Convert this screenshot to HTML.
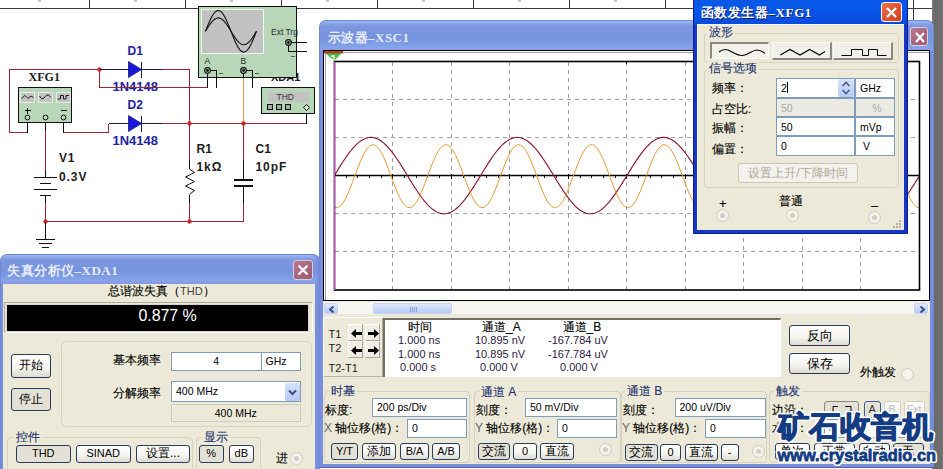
<!DOCTYPE html>
<html><head><meta charset="utf-8">
<style>
*{box-sizing:border-box;margin:0;padding:0}
html,body{width:943px;height:469px;overflow:hidden;background:#fff}
body{position:relative;font-family:"Liberation Sans",sans-serif;font-size:12px;color:#000}
.a{position:absolute}
svg{position:absolute;left:0;top:0;overflow:visible}
.sch{font-family:"Liberation Sans",sans-serif;font-weight:bold}
.win-in{background:#7a8ede;border:1px solid #6f88d4;border-bottom-color:#5a5aa8}
.tb-in{background:linear-gradient(#a0baf0 0,#8ea9ea 2px,#7b97e0 5px,#7693de 55%,#84a3ea 88%,#8e96dc 100%)}
.ttl-in{color:#e6ebf8;font-family:"Liberation Serif",serif;font-weight:bold;letter-spacing:0.2px;white-space:nowrap;line-height:14px}
.xbtn-in{background:linear-gradient(135deg,#b87890,#9c5870);border:1px solid #dccce0;border-radius:3px}
.txt{font-size:12px;white-space:nowrap;line-height:13px;-webkit-text-stroke:0.12px #000}
.hdr{font-size:12px;white-space:nowrap;line-height:13px;-webkit-text-stroke:0.12px #000}
.val{font-size:11px;white-space:nowrap;line-height:12px;color:#2c2040}
.btn{border:1px solid #2a3c5c;border-radius:3px;background:linear-gradient(#fff,#f4f3ee 60%,#dcdad0);text-align:center;font-size:12px;line-height:15px;white-space:nowrap;overflow:hidden}
.btn.pressed{background:#e3e1d6}
.edit{background:#fff;border:1px solid #7f9db9;font-size:10.5px;line-height:17px;padding-left:4px;white-space:nowrap;overflow:hidden}
.grp{border:1px solid #d5d2c2;border-radius:4px}
.glbl{background:#ece9d8;color:#1e3470;font-size:12px;line-height:13px;padding:0 2px;white-space:nowrap;-webkit-text-stroke:0.12px #1e3470}
.radio{width:13px;height:13px;border-radius:50%;border:1px solid #d0ccc0;background:#f4f2ea}
.radio.dis::after{content:"";position:absolute;left:3px;top:3px;width:5px;height:5px;border-radius:50%;background:#d0cdc4}
.sbtn{background:linear-gradient(#dfe8fc,#b8cbf6);border:1px solid #c5d4f6;border-radius:2px}
.abtn{width:15px;height:17px;background:#efede4;border-right:1px solid #a8a69a;border-bottom:1px solid #a8a69a;border-top:1px solid #fff;border-left:1px solid #fff}
.win-act{background:#1636c4;border:1px solid #0c1c8c}
.tb-act{background:linear-gradient(#2a6cf0 0,#0a5ae8 3px,#0656e8 50%,#0a4ee0 90%,#0846d4 100%)}
.ttl-act{color:#fff;font-family:"Liberation Serif",serif;font-weight:bold;white-space:nowrap;text-shadow:1px 1px 0 #0a1c70;line-height:14px;letter-spacing:0.3px}
.xbtn-act{background:linear-gradient(135deg,#ee7050,#d03c1c);border:1px solid #fff;border-radius:3px}
.wbtn{background:#f0efe8;border-right:2px solid #8c8a7e;border-bottom:2px solid #8c8a7e;border-top:1px solid #fff;border-left:1px solid #fff}
.wbtn.pressed{background:#f2f1ea;border-top:2px solid #8c8a7e;border-left:2px solid #8c8a7e;border-right:1px solid #fff;border-bottom:1px solid #fff}
.btn.dis{color:#aca899;border-color:#c9c7ba;background:#f3f2ec}
.wm1{font-size:32px;font-weight:900;color:#143c82;letter-spacing:-1px;white-space:nowrap;line-height:40px;-webkit-text-stroke:3px #fff;paint-order:stroke fill}
.wm2{font-size:17px;font-weight:bold;color:#143c82;white-space:nowrap;line-height:20px;-webkit-text-stroke:3px #fff;paint-order:stroke fill}
</style></head><body>

<!-- ===== schematic background ===== -->
<svg width="943" height="469" viewBox="0 0 943 469" shape-rendering="crispEdges">
  <g stroke="#3a3a3a" stroke-width="1" fill="none">
    <line x1="0" y1="8.5" x2="908" y2="8.5"/>
    <line x1="908" y1="8.5" x2="932" y2="8.5"/>
    <line x1="89.5" y1="0" x2="89.5" y2="8"/>
    <line x1="185.5" y1="0" x2="185.5" y2="8"/>
    <line x1="281.5" y1="0" x2="281.5" y2="8"/>
    <line x1="377.5" y1="0" x2="377.5" y2="8"/>
    <line x1="473.5" y1="0" x2="473.5" y2="8"/>
    <line x1="569.5" y1="0" x2="569.5" y2="8"/>
    <line x1="665.5" y1="0" x2="665.5" y2="8"/>
    <line x1="913.5" y1="0" x2="913.5" y2="20"/>
  </g>
  <line x1="0" y1="12.5" x2="320" y2="12.5" stroke="#f2f2f2" stroke-width="1"/>
  <g fill="#c8c8c8" shape-rendering="auto"><rect x="38" y="0" width="3" height="2"/><rect x="134" y="0" width="3" height="2"/><rect x="230" y="0" width="3" height="2"/><rect x="326" y="0" width="3" height="2"/><rect x="422" y="0" width="3" height="2"/><rect x="518" y="0" width="3" height="2"/><rect x="614" y="0" width="3" height="2"/></g>
  <g stroke="#9c2434" stroke-width="1" fill="none">
    <polyline points="162,69.5 189.5,69.5 189.5,160"/>
    <polyline points="99.5,69.5 9.5,69.5 9.5,132.5 27.5,132.5"/>
    <polyline points="99.5,69.5 99.5,87.5 207.5,87.5"/>
    <polyline points="63.5,132.5 108.5,132.5 108.5,123.5"/>
    <polyline points="162,123.5 306.5,123.5"/>
    <line x1="45.5" y1="131" x2="45.5" y2="170"/>
    <line x1="189.5" y1="203" x2="189.5" y2="222"/>
    <line x1="243.5" y1="123" x2="243.5" y2="160"/>
    <line x1="243.5" y1="203" x2="243.5" y2="222"/>
    <polyline points="45.5,203 45.5,221.5 243.5,221.5"/>
  </g>
  <line x1="243.5" y1="77" x2="243.5" y2="123" stroke="#e0a050" stroke-width="1"/>
  <g fill="#c82830" shape-rendering="auto">
    <circle cx="99.5" cy="69.5" r="2.2"/>
    <circle cx="189.5" cy="123.5" r="2.2"/>
    <circle cx="243.5" cy="123.5" r="2.2"/>
    <circle cx="189.5" cy="221.5" r="2.2"/>
    <circle cx="45.5" cy="221.5" r="2.2"/>
  </g>
  <g stroke="#1c1c5c" stroke-width="1" fill="none">
    <line x1="100" y1="69.5" x2="162" y2="69.5"/>
    <line x1="108.5" y1="123.5" x2="162" y2="123.5"/>
  </g>
  <g fill="#1616e0" stroke="#1c1c6c" stroke-width="0.8" shape-rendering="auto">
    <polygon points="128.5,61.5 128.5,77.5 141.5,69.5"/>
    <polygon points="128.5,115.5 128.5,131.5 141.5,123.5"/>
  </g>
  <g stroke="#1c1c5c" stroke-width="1.3">
    <line x1="141.8" y1="62" x2="141.8" y2="78"/>
    <line x1="141.8" y1="116" x2="141.8" y2="132"/>
  </g>
  <g class="sch" fill="#2222a0" font-size="12" shape-rendering="auto">
    <text x="127.5" y="55">D1</text>
    <text x="112.5" y="90.8" textLength="45.5" lengthAdjust="spacingAndGlyphs">1N4148</text>
    <text x="127.5" y="109">D2</text>
    <text x="112.5" y="145" textLength="45.5" lengthAdjust="spacingAndGlyphs">1N4148</text>
  </g>
  <line x1="99.5" y1="87.5" x2="207.5" y2="87.5" stroke="#9c2434" stroke-width="1"/>
  <g stroke="#111" stroke-width="1" fill="none">
    <line x1="45.5" y1="117" x2="45.5" y2="131"/>
    <line x1="27.5" y1="117" x2="27.5" y2="132.5"/>
    <line x1="63.5" y1="117" x2="63.5" y2="132.5"/>
    <line x1="45.5" y1="170" x2="45.5" y2="177"/>
    <line x1="45.5" y1="195" x2="45.5" y2="203"/>
    <line x1="34" y1="177.5" x2="57" y2="177.5"/>
    <line x1="39.5" y1="183.5" x2="51" y2="183.5"/>
    <line x1="34" y1="189.5" x2="57" y2="189.5"/>
    <line x1="39.5" y1="195.5" x2="51" y2="195.5"/>
    <line x1="45.5" y1="221.5" x2="45.5" y2="239.5"/>
    <line x1="36" y1="239.5" x2="55" y2="239.5"/>
    <line x1="39" y1="243.5" x2="52" y2="243.5"/>
    <line x1="42" y1="247.5" x2="49" y2="247.5"/>
    <line x1="189.5" y1="160" x2="189.5" y2="169"/>
    <line x1="189.5" y1="194.5" x2="189.5" y2="203"/>
    <line x1="243.5" y1="160" x2="243.5" y2="179.5"/>
    <line x1="243.5" y1="185.5" x2="243.5" y2="203"/>
    <line x1="306.5" y1="108" x2="306.5" y2="123.5"/>
  </g>
  <polyline shape-rendering="auto" points="189.5,169 194.5,172.5 185.5,177 194.5,181.5 185.5,186 194.5,190.5 189.5,194.5" stroke="#111" stroke-width="1" fill="none"/>
  <g stroke="#111" stroke-width="2">
    <line x1="234" y1="180" x2="253" y2="180"/>
    <line x1="234" y1="186" x2="253" y2="186"/>
  </g>
  <g class="sch" fill="#1c1c1c" font-size="12" shape-rendering="auto">
    <text x="59" y="162" letter-spacing="0.8">V1</text>
    <text x="59" y="180.5" letter-spacing="0.9">0.3V</text>
    <text x="196.5" y="153">R1</text>
    <text x="196.5" y="170.8" letter-spacing="0.9">1kΩ</text>
    <text x="255.5" y="153">C1</text>
    <text x="255.5" y="170.8" letter-spacing="0.9">10pF</text>
    <text x="271" y="80.5" font-size="11">XDA1</text>
  </g>
  <text x="28.5" y="80.5" font-family="Liberation Serif" font-weight="bold" font-size="11.5" fill="#1c1c1c" textLength="31.5" lengthAdjust="spacingAndGlyphs">XFG1</text>

  <rect x="18.5" y="87.5" width="53" height="35" fill="#b8d6b8" stroke="#111" stroke-width="1"/>
  <g fill="#c4c4c4" stroke="#e4efe4" stroke-width="1">
    <rect x="20.5" y="92.5" width="14" height="10"/>
    <rect x="38.5" y="92.5" width="14" height="10"/>
    <rect x="56.5" y="92.5" width="14" height="10"/>
  </g>
  <g stroke="#1a1a1a" stroke-width="1" fill="none" shape-rendering="auto">
    <polyline points="21.5,98.5 25,95.5 28,98.5 31,96 33.5,97.5"/>
    <path d="M39.5,96 Q41.5,100 43.5,98.5 Q46.5,94 48.5,95 L51,97.5"/>
    <polyline points="57.5,99 60.5,99 60.5,95.5 63.5,95.5 63.5,99 66,99 66,95.5 69,95.5"/>
  </g>
  <g stroke="#111" stroke-width="1">
    <line x1="24.5" y1="110.5" x2="30.5" y2="110.5"/>
    <line x1="27.5" y1="107.5" x2="27.5" y2="113.5"/>
    <line x1="60.5" y1="110.5" x2="66.5" y2="110.5"/>
  </g>
  <g fill="#b8d6b8" stroke="#111" stroke-width="1" shape-rendering="auto">
    <circle cx="27.5" cy="117.5" r="2.4"/>
    <circle cx="45.5" cy="117.5" r="2.4"/>
    <circle cx="63.5" cy="117.5" r="2.4"/>
  </g>

  <rect x="198.5" y="6.5" width="98" height="70.5" fill="#b8d6b8" stroke="#111" stroke-width="1"/>
  <rect x="201.5" y="9.5" width="62" height="43.5" fill="#c2c2c2" stroke="#f0f6f0" stroke-width="1"/>
  <g stroke="#111" stroke-width="1.1" fill="none" shape-rendering="auto">
    <path d="M205.5,31.3 L206.5,28.7 L207.5,26.2 L208.5,23.8 L209.5,21.5 L210.5,19.3 L211.5,17.3 L212.5,15.5 L213.5,14.0 L214.5,12.7 L215.5,11.7 L216.5,11.0 L217.5,10.6 L218.5,10.5 L219.5,10.7 L220.5,11.3 L221.5,12.1 L222.5,13.3 L223.5,14.7 L224.5,16.4 L225.5,18.3 L226.5,20.4 L227.5,22.6 L228.5,25.0 L229.5,27.5 L230.5,30.0 L231.5,32.6 L232.5,35.1 L233.5,37.6 L234.5,40.0 L235.5,42.2 L236.5,44.3 L237.5,46.2 L238.5,47.9 L239.5,49.3 L240.5,50.5 L241.5,51.3 L242.5,51.9 L243.5,52.1 L244.5,52.0 L245.5,51.6 L246.5,50.9 L247.5,49.9 L248.5,48.6 L249.5,47.1 L250.5,45.3 L251.5,43.3 L252.5,41.1 L253.5,38.8 L254.5,36.4 L255.5,33.9 L256.5,31.3"/>
    <path d="M205.5,31.3 L206.5,29.7 L207.5,28.0 L208.5,26.5 L209.5,25.0 L210.5,23.6 L211.5,22.3 L212.5,21.1 L213.5,20.1 L214.5,19.3 L215.5,18.7 L216.5,18.2 L217.5,18.0 L218.5,17.9 L219.5,18.1 L220.5,18.4 L221.5,19.0 L222.5,19.7 L223.5,20.6 L224.5,21.7 L225.5,22.9 L226.5,24.2 L227.5,25.7 L228.5,27.2 L229.5,28.8 L230.5,30.5 L231.5,32.1 L232.5,33.8 L233.5,35.4 L234.5,36.9 L235.5,38.4 L236.5,39.7 L237.5,40.9 L238.5,42.0 L239.5,42.9 L240.5,43.6 L241.5,44.2 L242.5,44.5 L243.5,44.7 L244.5,44.6 L245.5,44.4 L246.5,43.9 L247.5,43.3 L248.5,42.5 L249.5,41.5 L250.5,40.3 L251.5,39.0 L252.5,37.6 L253.5,36.1 L254.5,34.6 L255.5,32.9 L256.5,31.3"/>
  </g>
  <text x="271" y="35" font-size="8.5" fill="#2a2a2a" shape-rendering="auto">Ext Trg</text>
  <g stroke="#111" stroke-width="1" fill="none">
    <line x1="207.5" y1="70" x2="207.5" y2="87.5"/>
    <polyline points="207.5,70.5 216.5,70.5 216.5,87.5"/>
    <line x1="243.5" y1="70" x2="243.5" y2="77"/>
    <polyline points="243.5,70.5 252.5,70.5 252.5,87.5"/>
    <polyline points="288,42.5 307,42.5"/>
    <polyline points="288.5,42.5 288.5,51.5 307,51.5"/>
  </g>
  <g stroke="#111" stroke-width="1.2" fill="#b8d6b8" shape-rendering="auto">
    <circle cx="288.5" cy="42.5" r="2.8"/><circle cx="207.5" cy="70.5" r="2.8"/><circle cx="243.5" cy="70.5" r="2.8"/>
  </g>
  <g fill="#111" shape-rendering="auto"><circle cx="288.5" cy="42.5" r="1.4"/><circle cx="207.5" cy="70.5" r="1.4"/><circle cx="243.5" cy="70.5" r="1.4"/></g>
  <text x="204.5" y="64" font-size="8.5" fill="#2a2a2a" shape-rendering="auto">A</text>
  <text x="240.5" y="64" font-size="8.5" fill="#2a2a2a" shape-rendering="auto">B</text>
  <g stroke="#555" stroke-width="1"><line x1="219" y1="73.5" x2="223" y2="73.5"/><line x1="255" y1="73.5" x2="259" y2="73.5"/><line x1="291" y1="56.5" x2="295" y2="56.5"/></g>

  <rect x="261.5" y="87.5" width="53" height="25.5" fill="#b8d6b8" stroke="#111" stroke-width="1"/>
  <rect x="267.5" y="91.5" width="41" height="10" fill="#c2c2c2"/>
  <text x="276.5" y="99.8" font-size="8.5" fill="#333" shape-rendering="auto">THD</text>
  <g fill="#a8a8a8" stroke="#111" stroke-width="1">
    <rect x="267.5" y="104.5" width="5" height="5"/>
    <rect x="276.5" y="104.5" width="5" height="5"/>
    <rect x="285.5" y="104.5" width="5" height="5"/>
  </g>
  <polygon shape-rendering="auto" points="306.5,104.5 309.5,107.5 306.5,110.5 303.5,107.5" fill="#d8ecd8" stroke="#111" stroke-width="1"/>
</svg>

<!-- ===== Oscilloscope window (inactive) ===== -->
<div class="a" style="left:932px;top:0;width:11px;height:469px;background:linear-gradient(90deg,#7a7a7a,#6a6a6a 25%,#6c6c6c 80%,#777)"></div>
<div class="a win-in" style="left:319px;top:20px;width:615px;height:447.5px;border-radius:7px 7px 0 0"></div>
<div class="a tb-in" style="left:320px;top:21px;width:613px;height:29.5px;border-radius:6px 6px 0 0"></div>
<div class="a ttl-in" style="left:327.5px;top:30.5px;font-size:13px;letter-spacing:0.5px">示波器–XSC1</div>
<div class="a xbtn-in" style="left:910px;top:27px;width:18px;height:19px"><svg width="18" height="19"><path d="M5,5 L13,14 M13,5 L5,14" stroke="#fff" stroke-width="2.2"/></svg></div>
<div class="a" style="left:323px;top:50px;width:607px;height:414px;background:#ece9d8"></div>
<!-- display frame -->
<div class="a" style="left:323px;top:50px;width:607px;height:251px;border:1.5px solid #000;background:#fff"></div>
<div class="a" style="left:324.5px;top:51.5px;width:604px;height:248px;border-top:1.5px solid #a0a0a0;border-left:1.5px solid #a0a0a0"></div>
<svg width="943" height="469" viewBox="0 0 943 469">
<g stroke="#a0a0a0" stroke-width="1" stroke-dasharray="4,4" fill="none" shape-rendering="crispEdges"><line x1="392.5" y1="61.5" x2="392.5" y2="290"/><line x1="451.5" y1="61.5" x2="451.5" y2="290"/><line x1="509.5" y1="61.5" x2="509.5" y2="290"/><line x1="568.5" y1="61.5" x2="568.5" y2="290"/><line x1="626.5" y1="61.5" x2="626.5" y2="290"/><line x1="685.5" y1="61.5" x2="685.5" y2="290"/><line x1="743.5" y1="61.5" x2="743.5" y2="290"/><line x1="802.5" y1="61.5" x2="802.5" y2="290"/><line x1="860.5" y1="61.5" x2="860.5" y2="290"/><line x1="334.5" y1="99.5" x2="919.5" y2="99.5"/><line x1="334.5" y1="137.5" x2="919.5" y2="137.5"/><line x1="334.5" y1="175.5" x2="919.5" y2="175.5"/><line x1="334.5" y1="213.5" x2="919.5" y2="213.5"/><line x1="334.5" y1="251.5" x2="919.5" y2="251.5"/></g>
<g stroke="#000" stroke-width="1" shape-rendering="crispEdges"><line x1="334.5" y1="174" x2="334.5" y2="179"/><line x1="346.5" y1="175" x2="346.5" y2="178"/><line x1="357.5" y1="175" x2="357.5" y2="178"/><line x1="369.5" y1="175" x2="369.5" y2="178"/><line x1="381.5" y1="175" x2="381.5" y2="178"/><line x1="392.5" y1="174" x2="392.5" y2="179"/><line x1="404.5" y1="175" x2="404.5" y2="178"/><line x1="416.5" y1="175" x2="416.5" y2="178"/><line x1="427.5" y1="175" x2="427.5" y2="178"/><line x1="439.5" y1="175" x2="439.5" y2="178"/><line x1="451.5" y1="174" x2="451.5" y2="179"/><line x1="463.5" y1="175" x2="463.5" y2="178"/><line x1="474.5" y1="175" x2="474.5" y2="178"/><line x1="486.5" y1="175" x2="486.5" y2="178"/><line x1="498.5" y1="175" x2="498.5" y2="178"/><line x1="509.5" y1="174" x2="509.5" y2="179"/><line x1="521.5" y1="175" x2="521.5" y2="178"/><line x1="533.5" y1="175" x2="533.5" y2="178"/><line x1="544.5" y1="175" x2="544.5" y2="178"/><line x1="556.5" y1="175" x2="556.5" y2="178"/><line x1="568.5" y1="174" x2="568.5" y2="179"/><line x1="580.5" y1="175" x2="580.5" y2="178"/><line x1="591.5" y1="175" x2="591.5" y2="178"/><line x1="603.5" y1="175" x2="603.5" y2="178"/><line x1="615.5" y1="175" x2="615.5" y2="178"/><line x1="626.5" y1="174" x2="626.5" y2="179"/><line x1="638.5" y1="175" x2="638.5" y2="178"/><line x1="650.5" y1="175" x2="650.5" y2="178"/><line x1="661.5" y1="175" x2="661.5" y2="178"/><line x1="673.5" y1="175" x2="673.5" y2="178"/><line x1="685.5" y1="174" x2="685.5" y2="179"/><line x1="697.5" y1="175" x2="697.5" y2="178"/><line x1="708.5" y1="175" x2="708.5" y2="178"/><line x1="720.5" y1="175" x2="720.5" y2="178"/><line x1="732.5" y1="175" x2="732.5" y2="178"/><line x1="743.5" y1="174" x2="743.5" y2="179"/><line x1="755.5" y1="175" x2="755.5" y2="178"/><line x1="767.5" y1="175" x2="767.5" y2="178"/><line x1="778.5" y1="175" x2="778.5" y2="178"/><line x1="790.5" y1="175" x2="790.5" y2="178"/><line x1="802.5" y1="174" x2="802.5" y2="179"/><line x1="814.5" y1="175" x2="814.5" y2="178"/><line x1="825.5" y1="175" x2="825.5" y2="178"/><line x1="837.5" y1="175" x2="837.5" y2="178"/><line x1="849.5" y1="175" x2="849.5" y2="178"/><line x1="860.5" y1="174" x2="860.5" y2="179"/><line x1="872.5" y1="175" x2="872.5" y2="178"/><line x1="884.5" y1="175" x2="884.5" y2="178"/><line x1="895.5" y1="175" x2="895.5" y2="178"/><line x1="907.5" y1="175" x2="907.5" y2="178"/><line x1="919.5" y1="174" x2="919.5" y2="179"/><line x1="626.5" y1="61" x2="626.5" y2="64"/></g>
<line x1="334" y1="175.5" x2="919.5" y2="175.5" stroke="#000" stroke-width="1.5"/>
<path d="M334.3,175.60 L335.8,173.14 L337.3,170.69 L338.8,168.26 L340.3,165.87 L341.8,163.51 L343.3,161.20 L344.8,158.95 L346.3,156.77 L347.8,154.67 L349.3,152.66 L350.8,150.74 L352.3,148.92 L353.8,147.22 L355.3,145.63 L356.8,144.17 L358.3,142.84 L359.8,141.64 L361.3,140.58 L362.8,139.67 L364.3,138.91 L365.8,138.30 L367.3,137.85 L368.8,137.55 L370.3,137.41 L371.8,137.43 L373.3,137.61 L374.8,137.94 L376.3,138.43 L377.8,139.08 L379.3,139.87 L380.8,140.82 L382.3,141.91 L383.8,143.14 L385.3,144.50 L386.8,145.99 L388.3,147.61 L389.8,149.34 L391.3,151.18 L392.8,153.12 L394.3,155.15 L395.8,157.27 L397.3,159.47 L398.8,161.73 L400.3,164.05 L401.8,166.42 L403.3,168.83 L404.8,171.26 L406.3,173.71 L407.8,176.17 L409.3,178.63 L410.8,181.08 L412.3,183.50 L413.8,185.89 L415.3,188.24 L416.8,190.53 L418.3,192.76 L419.8,194.92 L421.3,197.01 L422.8,199.00 L424.3,200.89 L425.8,202.68 L427.3,204.36 L428.8,205.92 L430.3,207.35 L431.8,208.65 L433.3,209.82 L434.8,210.84 L436.3,211.72 L437.8,212.44 L439.3,213.02 L440.8,213.43 L442.3,213.70 L443.8,213.80 L445.3,213.74 L446.8,213.53 L448.3,213.16 L449.8,212.63 L451.3,211.95 L452.8,211.12 L454.3,210.14 L455.8,209.02 L457.3,207.76 L458.8,206.36 L460.3,204.84 L461.8,203.20 L463.3,201.44 L464.8,199.58 L466.3,197.61 L467.8,195.56 L469.3,193.42 L470.8,191.21 L472.3,188.93 L473.8,186.60 L475.3,184.22 L476.8,181.81 L478.3,179.37 L479.8,176.91 L481.3,174.45 L482.8,172.00 L484.3,169.56 L485.8,167.14 L487.3,164.76 L488.8,162.42 L490.3,160.14 L491.8,157.93 L493.3,155.78 L494.8,153.72 L496.3,151.75 L497.8,149.88 L499.3,148.11 L500.8,146.46 L502.3,144.93 L503.8,143.53 L505.3,142.26 L506.8,141.13 L508.3,140.14 L509.8,139.30 L511.3,138.61 L512.8,138.07 L514.3,137.69 L515.8,137.47 L517.3,137.40 L518.8,137.49 L520.3,137.74 L521.8,138.15 L523.3,138.71 L524.8,139.43 L526.3,140.30 L527.8,141.31 L529.3,142.46 L530.8,143.76 L532.3,145.18 L533.8,146.73 L535.3,148.40 L536.8,150.18 L538.3,152.07 L539.8,154.06 L541.3,156.13 L542.8,158.29 L544.3,160.52 L545.8,162.81 L547.3,165.15 L548.8,167.54 L550.3,169.96 L551.8,172.40 L553.3,174.86 L554.8,177.32 L556.3,179.78 L557.8,182.21 L559.3,184.62 L560.8,186.99 L562.3,189.31 L563.8,191.58 L565.3,193.78 L566.8,195.91 L568.3,197.95 L569.8,199.90 L571.3,201.74 L572.8,203.48 L574.3,205.10 L575.8,206.61 L577.3,207.98 L578.8,209.22 L580.3,210.31 L581.8,211.27 L583.3,212.07 L584.8,212.73 L586.3,213.23 L587.8,213.58 L589.3,213.76 L590.8,213.79 L592.3,213.66 L593.8,213.38 L595.3,212.93 L596.8,212.33 L598.3,211.58 L599.8,210.68 L601.3,209.63 L602.8,208.45 L604.3,207.12 L605.8,205.67 L607.3,204.09 L608.8,202.39 L610.3,200.58 L611.8,198.67 L613.3,196.66 L614.8,194.57 L616.3,192.40 L617.8,190.15 L619.3,187.85 L620.8,185.49 L622.3,183.10 L623.8,180.67 L625.3,178.22 L626.8,175.76 L628.3,173.30 L629.8,170.85 L631.3,168.42 L632.8,166.02 L634.3,163.66 L635.8,161.35 L637.3,159.10 L638.8,156.92 L640.3,154.81 L641.8,152.79 L643.3,150.86 L644.8,149.04 L646.3,147.33 L647.8,145.73 L649.3,144.26 L650.8,142.92 L652.3,141.72 L653.8,140.65 L655.3,139.73 L656.8,138.96 L658.3,138.34 L659.8,137.87 L661.3,137.57 L662.8,137.42 L664.3,137.42 L665.8,137.59 L667.3,137.91 L668.8,138.39 L670.3,139.03 L671.8,139.82 L673.3,140.75 L674.8,141.83 L676.3,143.05 L677.8,144.40 L679.3,145.89 L680.8,147.50 L682.3,149.22 L683.8,151.05 L685.3,152.99 L686.8,155.02 L688.3,157.13 L689.8,159.32 L691.3,161.58 L692.8,163.90 L694.3,166.26 L695.8,168.67 L697.3,171.10 L698.8,173.55 L700.3,176.01 L701.8,178.47 L703.3,180.91 L704.8,183.34 L706.3,185.73 L707.8,188.08 L709.3,190.38 L710.8,192.62 L712.3,194.78 L713.8,196.87 L715.3,198.87 L716.8,200.77 L718.3,202.57 L719.8,204.25 L721.3,205.82 L722.8,207.26 L724.3,208.57 L725.8,209.75 L727.3,210.78 L728.8,211.66 L730.3,212.40 L731.8,212.98 L733.3,213.41 L734.8,213.68 L736.3,213.80 L737.8,213.75 L739.3,213.55 L740.8,213.19 L742.3,212.67 L743.8,212.00 L745.3,211.18 L746.8,210.21 L748.3,209.10 L749.8,207.85 L751.3,206.46 L752.8,204.95 L754.3,203.31 L755.8,201.56 L757.3,199.70 L758.8,197.75 L760.3,195.70 L761.8,193.56 L763.3,191.36 L764.8,189.08 L766.3,186.76 L767.8,184.38 L769.3,181.97 L770.8,179.53 L772.3,177.08 L773.8,174.62 L775.3,172.16 L776.8,169.72 L778.3,167.30 L779.8,164.92 L781.3,162.58 L782.8,160.29 L784.3,158.07 L785.8,155.92 L787.3,153.86 L788.8,151.88 L790.3,150.00 L791.8,148.23 L793.3,146.57 L794.8,145.03 L796.3,143.62 L797.8,142.34 L799.3,141.20 L800.8,140.20 L802.3,139.35 L803.8,138.65 L805.3,138.10 L806.8,137.71 L808.3,137.48 L809.8,137.40 L811.3,137.48 L812.8,137.72 L814.3,138.12 L815.8,138.67 L817.3,139.38 L818.8,140.23 L820.3,141.24 L821.8,142.38 L823.3,143.67 L824.8,145.08 L826.3,146.62 L827.8,148.29 L829.3,150.06 L830.8,151.94 L832.3,153.92 L833.8,155.99 L835.3,158.14 L836.8,160.37 L838.3,162.65 L839.8,165.00 L841.3,167.38 L842.8,169.80 L844.3,172.24 L845.8,174.70 L847.3,177.16 L848.8,179.61 L850.3,182.05 L851.8,184.46 L853.3,186.83 L854.8,189.16 L856.3,191.43 L857.8,193.64 L859.3,195.77 L860.8,197.81 L862.3,199.77 L863.8,201.62 L865.3,203.37 L866.8,205.00 L868.3,206.51 L869.8,207.89 L871.3,209.14 L872.8,210.24 L874.3,211.21 L875.8,212.03 L877.3,212.69 L878.8,213.20 L880.3,213.56 L881.8,213.76 L883.3,213.80 L884.8,213.68 L886.3,213.40 L887.8,212.97 L889.3,212.38 L890.8,211.64 L892.3,210.75 L893.8,209.71 L895.3,208.53 L896.8,207.22 L898.3,205.77 L899.8,204.20 L901.3,202.51 L902.8,200.71 L904.3,198.80 L905.8,196.80 L907.3,194.71 L908.8,192.54 L910.3,190.30 L911.8,188.00 L913.3,185.65 L914.8,183.26 L916.3,180.83 L917.8,178.39 L919.3,175.93" fill="none" stroke="#8a1a30" stroke-width="1.15"/>
<path d="M334.3,207.13 L335.8,207.64 L337.3,207.63 L338.8,207.08 L340.3,206.02 L341.8,204.47 L343.3,202.44 L344.8,199.97 L346.3,197.10 L347.8,193.89 L349.3,190.38 L350.8,186.63 L352.3,182.71 L353.8,178.68 L355.3,174.60 L356.8,170.56 L358.3,166.61 L359.8,162.82 L361.3,159.25 L362.8,155.97 L364.3,153.02 L365.8,150.46 L367.3,148.33 L368.8,146.67 L370.3,145.50 L371.8,144.85 L373.3,144.72 L374.8,145.11 L376.3,146.03 L377.8,147.44 L379.3,149.34 L380.8,151.69 L382.3,154.45 L383.8,157.57 L385.3,161.00 L386.8,164.69 L388.3,168.57 L389.8,172.57 L391.3,176.64 L392.8,180.70 L394.3,184.69 L395.8,188.53 L397.3,192.17 L398.8,195.54 L400.3,198.58 L401.8,201.25 L403.3,203.51 L404.8,205.31 L406.3,206.62 L407.8,207.42 L409.3,207.70 L410.8,207.45 L412.3,206.69 L413.8,205.41 L415.3,203.64 L416.8,201.42 L418.3,198.77 L419.8,195.75 L421.3,192.40 L422.8,188.78 L424.3,184.95 L425.8,180.97 L427.3,176.91 L428.8,172.84 L430.3,168.83 L431.8,164.94 L433.3,161.24 L434.8,157.79 L436.3,154.65 L437.8,151.86 L439.3,149.49 L440.8,147.56 L442.3,146.10 L443.8,145.16 L445.3,144.73 L446.8,144.82 L448.3,145.44 L449.8,146.58 L451.3,148.21 L452.8,150.31 L454.3,152.84 L455.8,155.76 L457.3,159.02 L458.8,162.57 L460.3,166.35 L461.8,170.29 L463.3,174.33 L464.8,178.41 L466.3,182.44 L467.8,186.37 L469.3,190.13 L470.8,193.66 L472.3,196.90 L473.8,199.79 L475.3,202.28 L476.8,204.34 L478.3,205.93 L479.8,207.03 L481.3,207.61 L482.8,207.66 L484.3,207.18 L485.8,206.19 L487.3,204.70 L488.8,202.73 L490.3,200.32 L491.8,197.51 L493.3,194.33 L494.8,190.86 L496.3,187.14 L497.8,183.24 L499.3,179.22 L500.8,175.15 L502.3,171.09 L503.8,167.13 L505.3,163.31 L506.8,159.71 L508.3,156.39 L509.8,153.39 L511.3,150.78 L512.8,148.59 L514.3,146.87 L515.8,145.63 L517.3,144.91 L518.8,144.70 L520.3,145.03 L521.8,145.87 L523.3,147.23 L524.8,149.06 L526.3,151.35 L527.8,154.06 L529.3,157.13 L530.8,160.53 L532.3,164.18 L533.8,168.04 L535.3,172.04 L536.8,176.10 L538.3,180.16 L539.8,184.16 L541.3,188.03 L542.8,191.69 L544.3,195.10 L545.8,198.20 L547.3,200.92 L548.8,203.23 L550.3,205.09 L551.8,206.47 L553.3,207.34 L554.8,207.69 L556.3,207.52 L557.8,206.82 L559.3,205.61 L560.8,203.91 L562.3,201.74 L563.8,199.15 L565.3,196.17 L566.8,192.86 L568.3,189.27 L569.8,185.47 L571.3,181.51 L572.8,177.46 L574.3,173.39 L575.8,169.36 L577.3,165.45 L578.8,161.72 L580.3,158.23 L581.8,155.05 L583.3,152.21 L584.8,149.78 L586.3,147.79 L587.8,146.27 L589.3,145.25 L590.8,144.75 L592.3,144.78 L593.8,145.33 L595.3,146.40 L596.8,147.96 L598.3,150.00 L599.8,152.48 L601.3,155.35 L602.8,158.57 L604.3,162.08 L605.8,165.84 L607.3,169.76 L608.8,173.79 L610.3,177.86 L611.8,181.91 L613.3,185.86 L614.8,189.64 L616.3,193.21 L617.8,196.49 L619.3,199.42 L620.8,201.98 L622.3,204.10 L623.8,205.75 L625.3,206.91 L626.8,207.56 L628.3,207.68 L629.8,207.28 L631.3,206.36 L632.8,204.93 L634.3,203.02 L635.8,200.67 L637.3,197.90 L638.8,194.78 L640.3,191.34 L641.8,187.65 L643.3,183.77 L644.8,179.76 L646.3,175.69 L647.8,171.63 L649.3,167.65 L650.8,163.81 L652.3,160.18 L653.8,156.81 L655.3,153.77 L656.8,151.10 L658.3,148.86 L659.8,147.07 L661.3,145.77 L662.8,144.97 L664.3,144.70 L665.8,144.95 L667.3,145.73 L668.8,147.02 L670.3,148.79 L671.8,151.02 L673.3,153.68 L674.8,156.70 L676.3,160.06 L677.8,163.68 L679.3,167.52 L680.8,171.50 L682.3,175.55 L683.8,179.62 L685.3,183.63 L686.8,187.52 L688.3,191.22 L689.8,194.67 L691.3,197.80 L692.8,200.58 L694.3,202.95 L695.8,204.87 L697.3,206.32 L698.8,207.26 L700.3,207.68 L701.8,207.57 L703.3,206.94 L704.8,205.80 L706.3,204.16 L707.8,202.05 L709.3,199.52 L710.8,196.59 L712.3,193.32 L713.8,189.77 L715.3,185.99 L716.8,182.04 L718.3,178.00 L719.8,173.93 L721.3,169.89 L722.8,165.96 L724.3,162.21 L725.8,158.68 L727.3,155.45 L728.8,152.57 L730.3,150.08 L731.8,148.02 L733.3,146.44 L734.8,145.36 L736.3,144.79 L737.8,144.75 L739.3,145.23 L740.8,146.23 L742.3,147.73 L743.8,149.70 L745.3,152.12 L746.8,154.94 L748.3,158.12 L749.8,161.60 L751.3,165.32 L752.8,169.23 L754.3,173.25 L755.8,177.32 L757.3,181.37 L758.8,185.34 L760.3,189.15 L761.8,192.75 L763.3,196.07 L764.8,199.05 L766.3,201.66 L767.8,203.84 L769.3,205.56 L770.8,206.79 L772.3,207.50 L773.8,207.70 L775.3,207.36 L776.8,206.51 L778.3,205.15 L779.8,203.30 L781.3,201.01 L782.8,198.29 L784.3,195.21 L785.8,191.81 L787.3,188.15 L788.8,184.29 L790.3,180.30 L791.8,176.23 L793.3,172.17 L794.8,168.17 L796.3,164.31 L797.8,160.65 L799.3,157.24 L800.8,154.16 L802.3,151.44 L803.8,149.13 L805.3,147.28 L806.8,145.91 L808.3,145.05 L809.8,144.71 L811.3,144.89 L812.8,145.60 L814.3,146.82 L815.8,148.53 L817.3,150.70 L818.8,153.30 L820.3,156.28 L821.8,159.60 L823.3,163.19 L824.8,167.00 L826.3,170.96 L827.8,175.01 L829.3,179.08 L830.8,183.11 L832.3,187.01 L833.8,190.74 L835.3,194.22 L836.8,197.41 L838.3,200.23 L839.8,202.66 L841.3,204.64 L842.8,206.15 L844.3,207.16 L845.8,207.65 L847.3,207.62 L848.8,207.06 L850.3,205.98 L851.8,204.41 L853.3,202.36 L854.8,199.88 L856.3,197.00 L857.8,193.77 L859.3,190.26 L860.8,186.50 L862.3,182.57 L863.8,178.54 L865.3,174.47 L866.8,170.43 L868.3,166.48 L869.8,162.69 L871.3,159.14 L872.8,155.86 L874.3,152.93 L875.8,150.38 L877.3,148.27 L878.8,146.63 L880.3,145.47 L881.8,144.84 L883.3,144.72 L884.8,145.13 L886.3,146.06 L887.8,147.50 L889.3,149.41 L890.8,151.78 L892.3,154.55 L893.8,157.68 L895.3,161.12 L896.8,164.82 L898.3,168.70 L899.8,172.71 L901.3,176.78 L902.8,180.84 L904.3,184.82 L905.8,188.65 L907.3,192.28 L908.8,195.64 L910.3,198.68 L911.8,201.34 L913.3,203.58 L914.8,205.36 L916.3,206.65 L917.8,207.44 L919.3,207.70" fill="none" stroke="#e49a30" stroke-width="1"/>
<rect x="334.5" y="61.5" width="585" height="228.5" fill="none" stroke="#000" stroke-width="1.6"/>
<line x1="334.5" y1="61.5" x2="334.5" y2="290" stroke="#c050d0" stroke-width="1.2"/>
<polygon points="324,51.5 343,51.5 334,61" fill="#40c040"/>
<rect x="324" y="51" width="19" height="2.5" fill="#b04020"/>
<text x="331" y="59.5" font-size="7" fill="#fff" font-weight="bold">5</text>
</svg>
<!-- scrollbar -->
<div class="a" style="left:324px;top:302px;width:605px;height:12px;background:#f6f5ef"></div>
<div class="a sbtn" style="left:324px;top:302.5px;width:14px;height:11px"><svg width="14" height="11"><path d="M8.5,2.5 L5,5.5 L8.5,8.5" stroke="#3a4a8a" stroke-width="2" fill="none"/></svg></div>
<div class="a sbtn" style="left:914px;top:302.5px;width:14px;height:11px"><svg width="14" height="11"><path d="M5.5,2.5 L9,5.5 L5.5,8.5" stroke="#3a4a8a" stroke-width="2" fill="none"/></svg></div>
<div class="a sbtn" style="left:373px;top:302.5px;width:79px;height:11px"><svg width="79" height="11"><g stroke="#8aa0d8" stroke-width="1"><line x1="36.5" y1="3" x2="36.5" y2="8"/><line x1="38.5" y1="3" x2="38.5" y2="8"/><line x1="40.5" y1="3" x2="40.5" y2="8"/><line x1="42.5" y1="3" x2="42.5" y2="8"/></g></svg></div>

<!-- cursor panel -->
<div class="a" style="left:323px;top:317px;width:60px;height:60px;border-right:1px solid #b0ae9e;border-bottom:1px solid #b8b6a6;border-top:1px solid #fff;border-left:1px solid #fff"></div>
<div class="a txt" style="left:328.5px;top:328px;font-size:11px;-webkit-text-stroke:0;color:#1a1a1a">T1</div>
<div class="a txt" style="left:328.5px;top:342px;font-size:11px;-webkit-text-stroke:0;color:#1a1a1a">T2</div>
<div class="a txt" style="left:328.5px;top:362px;font-size:11px;-webkit-text-stroke:0;color:#1a1a1a">T2-T1</div>
<div class="a abtn" style="left:348px;top:324px"><svg width="15" height="17"><path d="M2,8.5 L7,4 L7,7 L13,7 L13,10 L7,10 L7,13 Z" fill="#000"/></svg></div>
<div class="a abtn" style="left:364.5px;top:324px"><svg width="15" height="17"><path d="M13,8.5 L8,4 L8,7 L2,7 L2,10 L8,10 L8,13 Z" fill="#000"/></svg></div>
<div class="a abtn" style="left:348px;top:341px"><svg width="15" height="17"><path d="M2,8.5 L7,4 L7,7 L13,7 L13,10 L7,10 L7,13 Z" fill="#000"/></svg></div>
<div class="a abtn" style="left:364.5px;top:341px"><svg width="15" height="17"><path d="M13,8.5 L8,4 L8,7 L2,7 L2,10 L8,10 L8,13 Z" fill="#000"/></svg></div>
<!-- readout -->
<div class="a" style="left:383px;top:318px;width:398px;height:59px;background:#fff;border-top:2px solid #716f64;border-left:2px solid #716f64;border-right:1px solid #f8f8f8"></div>
<div class="a hdr" style="left:408px;top:321px">时间</div>
<div class="a hdr" style="left:482px;top:321px">通道_A</div>
<div class="a hdr" style="left:562.5px;top:321px">通道_B</div>
<div class="a val" style="left:398px;top:334px">1.000 ns</div>
<div class="a val" style="left:398px;top:348px">1.000 ns</div>
<div class="a val" style="left:400px;top:361px">0.000 s</div>
<div class="a val" style="left:475px;top:334px">10.895 nV</div>
<div class="a val" style="left:475px;top:348px">10.895 nV</div>
<div class="a val" style="left:480px;top:361px">0.000 V</div>
<div class="a val" style="left:548px;top:334px">-167.784 uV</div>
<div class="a val" style="left:548px;top:348px">-167.784 uV</div>
<div class="a val" style="left:560px;top:361px">0.000 V</div>
<div class="a btn" style="left:789px;top:325px;width:61px;height:21px;line-height:20px;font-size:12.5px">反向</div>
<div class="a btn" style="left:789px;top:353px;width:61px;height:21px;line-height:20px;font-size:12.5px">保存</div>
<div class="a txt" style="left:860px;top:366px">外触发</div>
<div class="a radio" style="left:900.5px;top:368px"></div>

<!-- timebase group -->
<div class="a grp" style="left:323.5px;top:391px;width:146px;height:72px"></div>
<div class="a glbl" style="left:329px;top:385px">时基</div>
<div class="a txt" style="left:325px;top:403.5px">标度:</div>
<div class="a edit" style="left:372px;top:397.5px;width:94.5px;height:19px">200 ps/Div</div>
<div class="a txt" style="left:324px;top:422px"><span style="color:#666;-webkit-text-stroke:0">X</span> 轴位移(格)：</div>
<div class="a edit" style="left:407px;top:418.5px;width:59.5px;height:19px">0</div>
<div class="a btn pressed" style="left:331px;top:442.5px;width:27px;height:17px;font-size:11px">Y/T</div>
<div class="a btn" style="left:361.5px;top:442.5px;width:34.5px;height:17px">添加</div>
<div class="a btn" style="left:400px;top:442.5px;width:29px;height:17px;font-size:11px">B/A</div>
<div class="a btn" style="left:432px;top:442.5px;width:28px;height:17px;font-size:11px">A/B</div>

<!-- channel A group -->
<div class="a grp" style="left:473.5px;top:391px;width:147px;height:72px"></div>
<div class="a glbl" style="left:479px;top:385.5px">通道 A</div>
<div class="a txt" style="left:476px;top:403.5px">刻度：</div>
<div class="a edit" style="left:525px;top:397.5px;width:91.5px;height:19px">50 mV/Div</div>
<div class="a txt" style="left:475px;top:422px"><span style="color:#666;-webkit-text-stroke:0">Y</span> 轴位移(格)：</div>
<div class="a edit" style="left:557px;top:418.5px;width:59.5px;height:19px">0</div>
<div class="a btn pressed" style="left:477.5px;top:442.5px;width:32.5px;height:17px">交流</div>
<div class="a btn" style="left:513px;top:442.5px;width:24px;height:17px;font-size:11px">0</div>
<div class="a btn" style="left:540px;top:442.5px;width:34px;height:17px">直流</div>
<div class="a radio dis" style="left:598.5px;top:443px"></div>

<!-- channel B group -->
<div class="a grp" style="left:620.5px;top:391px;width:146px;height:72px"></div>
<div class="a glbl" style="left:625px;top:385px">通道 B</div>
<div class="a txt" style="left:623px;top:403.5px">刻度：</div>
<div class="a edit" style="left:674.5px;top:398px;width:91px;height:19px">200 uV/Div</div>
<div class="a txt" style="left:622px;top:422px"><span style="color:#666;-webkit-text-stroke:0">Y</span> 轴位移(格)：</div>
<div class="a edit" style="left:705px;top:418.5px;width:60.5px;height:19px">0</div>
<div class="a btn pressed" style="left:625px;top:444px;width:32.5px;height:17px">交流</div>
<div class="a btn" style="left:660px;top:444px;width:21px;height:17px;font-size:11px">0</div>
<div class="a btn" style="left:684.5px;top:444px;width:33.5px;height:17px">直流</div>
<div class="a btn" style="left:720.5px;top:444px;width:18px;height:17px;font-size:11px">-</div>
<div class="a radio dis" style="left:752px;top:444.5px"></div>

<!-- trigger group -->
<div class="a grp" style="left:769px;top:391px;width:161px;height:72px"></div>
<div class="a glbl" style="left:774px;top:385px">触发</div>
<div class="a txt" style="left:772px;top:403.5px">边沿：</div>
<div class="a txt" style="left:772px;top:422px">水平：</div>
<div class="a btn pressed" style="left:824px;top:401px;width:35px;height:17px;border-color:#8c8a80"><svg width="33" height="15"><polyline points="4,11.5 8,11.5 8,4.5 13,4.5" stroke="#000" fill="none"/><polyline points="20,4.5 26,4.5 26,11.5 29,11.5" stroke="#000" fill="none"/></svg></div>
<div class="a btn pressed" style="left:864px;top:401px;width:16.5px;height:17px;border-color:#3c5c9c;color:#333;font-size:11px">A</div>
<div class="a btn" style="left:883.5px;top:401px;width:17px;height:17px;border-color:#d0cec0;color:#bbb;font-size:11px">B</div>
<div class="a btn" style="left:903.5px;top:401px;width:21px;height:17px;border-color:#d0cec0;color:#bbb;font-size:10px">Ext</div>
<div class="a edit" style="left:824px;top:419px;width:100px;height:19px">0</div>
<div class="a btn" style="left:774.5px;top:443px;width:35.5px;height:17px">单次</div>
<div class="a btn" style="left:813.5px;top:443px;width:41.5px;height:17px">正常</div>
<div class="a btn" style="left:858.5px;top:443px;width:31px;height:17px">自动</div>
<div class="a btn pressed" style="left:892.5px;top:443px;width:31.5px;height:17px">无</div>

<!-- ===== Function generator window (active) ===== -->
<div class="a win-act" style="left:693px;top:-8px;width:215px;height:242px;border-radius:7px 7px 0 0"></div>
<div class="a tb-act" style="left:694px;top:-7px;width:213px;height:31.5px;border-radius:6px 6px 0 0"></div>
<div class="a" style="left:697px;top:24px;width:207px;height:206px;background:#f4f8ff"></div>
<div class="a ttl-act" style="left:700.5px;top:6px;font-size:13px;letter-spacing:0.6px">函数发生器–XFG1</div>
<div class="a xbtn-act" style="left:881px;top:1.5px;width:21px;height:20.5px"><svg width="19" height="19"><path d="M5,5 L14,14 M14,5 L5,14" stroke="#fff" stroke-width="2.4"/></svg></div>
<div class="a" style="left:697.5px;top:25px;width:206px;height:204.5px;background:#ece9d8"></div>
<div class="a grp" style="left:703.5px;top:33px;width:195px;height:30px"></div>
<div class="a glbl" style="left:707px;top:26px">波形</div>
<div class="a wbtn pressed" style="left:710px;top:42px;width:58.5px;height:17px"><svg width="58" height="17"><path d="M7,8 C10,5.5 13,5 16,6 C20,7.5 24,11.5 30,11.5 C36,11.5 40,6 45,6 C49,6 51,8 53,9.5" stroke="#000" stroke-width="1.1" fill="none"/></svg></div>
<div class="a wbtn" style="left:772px;top:41.5px;width:59.5px;height:18px"><svg width="58" height="17"><polyline points="7.3,12 17,6.5 27,12 36.7,6.5 46.5,12 52,8.5" stroke="#000" stroke-width="1.1" fill="none"/></svg></div>
<div class="a wbtn" style="left:832.5px;top:41.5px;width:60.5px;height:18px"><svg width="60" height="17"><polyline points="7.5,12.5 17.5,12.5 17.5,6.5 28.5,6.5 28.5,12.5 34.5,12.5 34.5,6.5 43.5,6.5 43.5,12.5 52.5,12.5" stroke="#000" stroke-width="1" fill="none"/></svg></div>
<div class="a grp" style="left:703.5px;top:69px;width:195px;height:119px"></div>
<div class="a glbl" style="left:707px;top:62px">信号选项</div>
<div class="a txt" style="left:712px;top:82px">频率：</div>
<div class="a txt" style="left:712px;top:102.5px">占空比:</div>
<div class="a txt" style="left:712px;top:122px">振幅：</div>
<div class="a txt" style="left:712px;top:142.5px">偏置：</div>
<div class="a edit" style="left:776px;top:78px;width:79px;height:20px;line-height:18px">2<span style="display:inline-block;width:1px;height:11px;background:#000;vertical-align:-1px"></span></div>
<div class="a" style="left:837.5px;top:79px;width:16.5px;height:18px;background:linear-gradient(#d8e4fb,#b7caf4);border-radius:2px"><svg width="16" height="18"><path d="M4.5,7 L8,3.5 L11.5,7 M4.5,11 L8,14.5 L11.5,11" stroke="#4a5a8a" stroke-width="1.6" fill="none"/></svg></div>
<div class="a edit" style="left:855px;top:78px;width:40px;height:20px;line-height:18px">GHz</div>
<div class="a edit" style="left:776px;top:97.5px;width:79px;height:19.5px;background:#ebeae3;color:#aaa;line-height:18px">50</div>
<div class="a edit" style="left:855px;top:97.5px;width:40px;height:19.5px;background:#ebeae3;color:#aaa;text-align:center;line-height:18px">%</div>
<div class="a edit" style="left:776px;top:116.5px;width:79px;height:19.5px;line-height:18px">50</div>
<div class="a edit" style="left:855px;top:116.5px;width:40px;height:19.5px;line-height:18px">mVp</div>
<div class="a edit" style="left:776px;top:136px;width:79px;height:19.5px;line-height:18px">0</div>
<div class="a edit" style="left:855px;top:136px;width:40px;height:19.5px;line-height:18px;padding-left:7px">V</div>
<div class="a btn dis" style="left:738px;top:162.5px;width:120px;height:20px;line-height:18px">设置上升/下降时间</div>
<div class="a txt" style="left:719px;top:197px;font-size:13px">+</div>
<div class="a txt" style="left:779px;top:195px">普通</div>
<div class="a txt" style="left:871px;top:199px;font-size:13px">–</div>
<div class="a radio dis" style="left:716px;top:209px"></div>
<div class="a radio dis" style="left:785.5px;top:208.5px"></div>
<div class="a radio dis" style="left:868px;top:211px"></div>
<svg width="943" height="469" style="pointer-events:none"><g fill="#b8b4a4"><rect x="899" y="220" width="2" height="2"/><rect x="896" y="223" width="2" height="2"/><rect x="899" y="223" width="2" height="2"/><rect x="893" y="226" width="2" height="2"/><rect x="896" y="226" width="2" height="2"/><rect x="899" y="226" width="2" height="2"/></g></svg>

<!-- ===== Distortion analyzer window (inactive) ===== -->
<div class="a win-in" style="left:0px;top:254px;width:319.5px;height:220px;border-radius:7px 7px 0 0"></div>
<div class="a tb-in" style="left:1px;top:255px;width:316px;height:28.5px;border-radius:6px 6px 0 0"></div>
<div class="a ttl-in" style="left:7px;top:263.5px;font-size:13px;letter-spacing:0.5px">失真分析仪–XDA1</div>
<div class="a xbtn-in" style="left:292.5px;top:260px;width:20px;height:20px"><svg width="18" height="18"><path d="M4.5,4.5 L13.5,13.5 M13.5,4.5 L4.5,13.5" stroke="#fff" stroke-width="2.2"/></svg></div>
<div class="a" style="left:3px;top:283.5px;width:312px;height:190px;background:#ece9d8"></div>
<div class="a txt" style="left:108px;top:285px">总谐波失真（<span style="font-size:11px;color:#444;-webkit-text-stroke:0">THD</span>）</div>
<div class="a" style="left:4px;top:301.5px;width:309px;height:31.5px;border:1px solid #aca899;border-right-color:#fff;border-bottom-color:#fff"></div>
<div class="a" style="left:6px;top:303.5px;width:303px;height:28px;background:#000;border:1px solid #d8d6cc"></div>
<div class="a" style="left:138.5px;top:306px;color:#fff;font-size:16px;line-height:20px;white-space:nowrap;letter-spacing:-0.1px">0.877 %</div>
<div class="a grp" style="left:60.5px;top:341px;width:251px;height:85.5px;border-radius:6px"></div>
<div class="a btn" style="left:10.5px;top:354px;width:40.5px;height:23.5px;line-height:21px">开始</div>
<div class="a btn pressed" style="left:10.5px;top:387.5px;width:40.5px;height:23px;line-height:21px">停止</div>
<div class="a txt" style="left:113px;top:354px">基本频率</div>
<div class="a txt" style="left:113px;top:387px">分解频率</div>
<div class="a edit" style="left:171px;top:352px;width:90.5px;height:19px;text-align:center;line-height:17px;padding-left:0">4</div>
<div class="a edit" style="left:260.5px;top:352px;width:40px;height:19px;line-height:17px">GHz</div>
<div class="a edit" style="left:171px;top:381px;width:129.5px;height:21px;line-height:19px">400 MHz</div>
<div class="a" style="left:284.5px;top:382.5px;width:15px;height:18px;background:linear-gradient(#d6e2fb,#b4c8f4);border-radius:2px"><svg width="15" height="18"><path d="M4,7.5 L7.5,11 L11,7.5" stroke="#3a4c8a" stroke-width="2" fill="none"/></svg></div>
<div class="a edit" style="left:171px;top:404px;width:129.5px;height:18px;background:#ece9d8;border-color:#cfcbbc;text-align:center;line-height:16px;padding-left:0">400 MHz</div>
<div class="a grp" style="left:7px;top:437px;width:186px;height:40px"></div>
<div class="a glbl" style="left:14px;top:431px">控件</div>
<div class="a btn pressed" style="left:16px;top:445px;width:54.5px;height:17.5px;font-size:11px">THD</div>
<div class="a btn" style="left:76px;top:445px;width:54.5px;height:17.5px;font-size:11px">SINAD</div>
<div class="a btn" style="left:136px;top:445px;width:54px;height:17.5px">设置...</div>
<div class="a grp" style="left:196px;top:437px;width:65px;height:40px"></div>
<div class="a glbl" style="left:202px;top:431px">显示</div>
<div class="a btn pressed" style="left:199px;top:445px;width:24.5px;height:17.5px;font-size:11px">%</div>
<div class="a btn" style="left:229px;top:445px;width:24.5px;height:17.5px;font-size:11px">dB</div>
<div class="a txt" style="left:276px;top:452px">进</div>
<div class="a radio dis" style="left:289.5px;top:452px"></div>

<!-- watermark -->
<svg width="943" height="469" style="pointer-events:none">
<g font-family="Liberation Sans" font-weight="bold" stroke-linejoin="round">
<text x="777.5" y="436.5" font-size="30" textLength="156" lengthAdjust="spacingAndGlyphs" fill="#143c82" stroke="#fff" stroke-width="4.5">矿石收音机</text>
<text x="777.5" y="436.5" font-size="30" textLength="156" lengthAdjust="spacingAndGlyphs" fill="#143c82" stroke="#143c82" stroke-width="1.2">矿石收音机</text>
<text x="777.5" y="460.8" font-size="17" textLength="158.5" lengthAdjust="spacingAndGlyphs" fill="#143c82" stroke="#fff" stroke-width="4">www.crystalradio.cn</text>
<text x="777.5" y="460.8" font-size="17" textLength="158.5" lengthAdjust="spacingAndGlyphs" fill="#143c82" stroke="#143c82" stroke-width="0.8">www.crystalradio.cn</text>
</g></svg>
</body></html>
